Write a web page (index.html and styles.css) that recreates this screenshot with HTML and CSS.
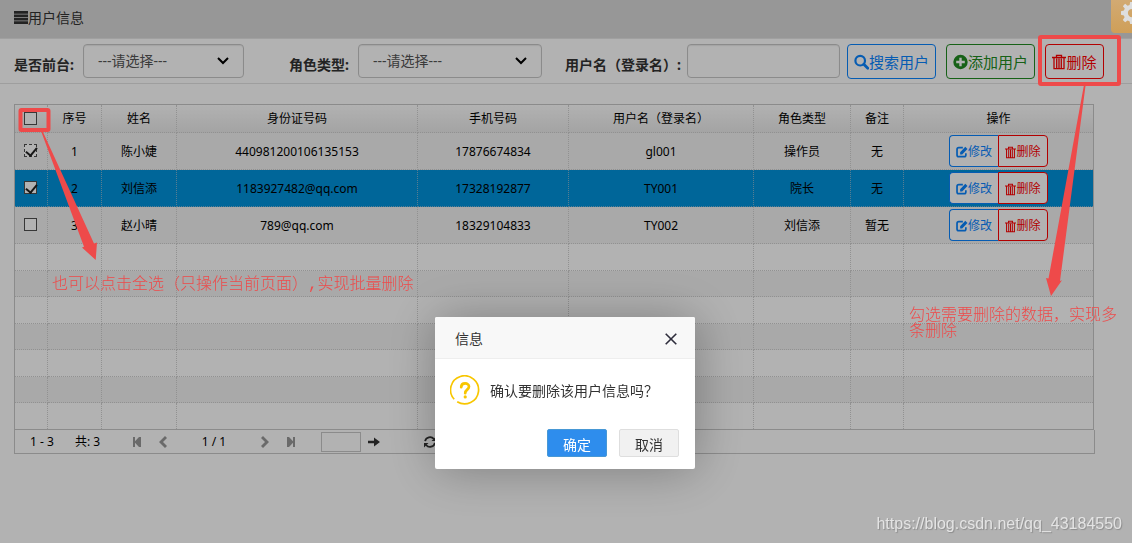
FILE: index.html
```html
<!DOCTYPE html>
<html lang="zh-CN">
<head>
<meta charset="utf-8">
<title>用户信息</title>
<link rel="stylesheet" href="styles.css">
</head>
<body>
<svg class="defs" aria-hidden="true">
  <symbol id="trash" viewBox="0 0 14 15"><path fill="none" stroke="currentColor" stroke-width="1.3" d="M0 3h14M4.5 3V.8h5V3M2 3.200v10.900h10V3.200M4.700 4v9.500M7 4v9.500M9.300 4v9.500"/></symbol>
  <symbol id="edit" viewBox="0 0 14 14"><path fill="none" stroke="currentColor" stroke-width="2" d="M8 2H3.2Q1.2 2 1.2 4v6.500q0 2 2 2h6.300q2 0 2-2V8.400"/><path fill="currentColor" d="M4.800 9.800V7.200L10.900 1l2.500 2.500-6.200 6.300z"/></symbol>
  <symbol id="chevron" viewBox="0 0 12 8"><path fill="none" stroke="currentColor" stroke-width="2" d="M1 1l5 5 5-5"/></symbol>
</svg>

<header class="titlebar">
  <svg class="menu-icon" viewBox="0 0 14 13" aria-hidden="true"><path fill="currentColor" d="M0 0h14v2.700H0zM0 3.400h14v2.700H0zM0 6.800h14v2.700H0zM0 10.300h14v2.700H0z"/></svg>
  <span>用户信息</span>
</header>

<form class="toolbar">
  <label class="label" for="front">是否前台:</label>
  <div class="select select-front">
    <select id="front"><option>---请选择---</option></select>
    <svg class="chevron" aria-hidden="true"><use href="#chevron"/></svg>
  </div>
  <label class="label label-role" for="role">角色类型:</label>
  <div class="select select-role">
    <select id="role"><option>---请选择---</option></select>
    <svg class="chevron" aria-hidden="true"><use href="#chevron"/></svg>
  </div>
  <label class="label label-login" for="login">用户名（登录名）:</label>
  <input class="login" id="login" type="text">
  <div class="actions">
    <button type="button" class="btn blue"><svg viewBox="0 0 15 15" aria-hidden="true"><circle cx="6.2" cy="6.2" r="4.8" fill="none" stroke="currentColor" stroke-width="2.2"/><path d="M9.8 9.8l4 4" stroke="currentColor" stroke-width="2.8" stroke-linecap="round"/></svg>搜索用户</button>
    <button type="button" class="btn green"><svg viewBox="0 0 15 15" aria-hidden="true"><circle cx="7.5" cy="7.5" r="7.2" fill="currentColor"/><path d="M7.5 3.2v8.6M3.2 7.5h8.6" stroke="#fff" stroke-width="2.4"/></svg>添加用户</button>
    <button type="button" class="btn red"><svg aria-hidden="true"><use href="#trash"/></svg>删除</button>
  </div>
</form>

<main class="grid">
  <table class="users">
    <colgroup><col class="c-check"><col class="c-no"><col class="c-name"><col class="c-id"><col class="c-phone"><col class="c-login"><col class="c-role"><col class="c-note"><col class="c-ops"></colgroup>
    <thead>
      <tr><th><input type="checkbox" aria-label="全选"></th><th>序号</th><th>姓名</th><th>身份证号码</th><th>手机号码</th><th>用户名（登录名）</th><th>角色类型</th><th>备注</th><th>操作</th></tr>
    </thead>
    <tbody>
      <tr class="data"><td><input class="focused" type="checkbox" checked aria-label="选择 1"></td><td>1</td><td>陈小婕</td><td>440981200106135153</td><td>17876674834</td><td>gl001</td><td>操作员</td><td>无</td><td><div class="pair"><button type="button" class="mini blue"><svg aria-hidden="true"><use href="#edit"/></svg>修改</button><button type="button" class="mini red"><svg aria-hidden="true"><use href="#trash"/></svg>删除</button></div></td></tr>
      <tr class="data selected"><td><input type="checkbox" checked aria-label="选择 2"></td><td>2</td><td>刘信添</td><td>1183927482@qq.com</td><td>17328192877</td><td>TY001</td><td>院长</td><td>无</td><td><div class="pair"><button type="button" class="mini blue"><svg aria-hidden="true"><use href="#edit"/></svg>修改</button><button type="button" class="mini red"><svg aria-hidden="true"><use href="#trash"/></svg>删除</button></div></td></tr>
      <tr class="data"><td><input type="checkbox" aria-label="选择 3"></td><td>3</td><td>赵小晴</td><td>789@qq.com</td><td>18329104833</td><td>TY002</td><td>刘信添</td><td>暂无</td><td><div class="pair"><button type="button" class="mini blue"><svg aria-hidden="true"><use href="#edit"/></svg>修改</button><button type="button" class="mini red"><svg aria-hidden="true"><use href="#trash"/></svg>删除</button></div></td></tr>
      <tr><td></td><td></td><td></td><td></td><td></td><td></td><td></td><td></td><td></td></tr>
      <tr><td></td><td></td><td></td><td></td><td></td><td></td><td></td><td></td><td></td></tr>
      <tr><td></td><td></td><td></td><td></td><td></td><td></td><td></td><td></td><td></td></tr>
      <tr><td></td><td></td><td></td><td></td><td></td><td></td><td></td><td></td><td></td></tr>
      <tr><td></td><td></td><td></td><td></td><td></td><td></td><td></td><td></td><td></td></tr>
      <tr><td></td><td></td><td></td><td></td><td></td><td></td><td></td><td></td><td></td></tr>
      <tr><td></td><td></td><td></td><td></td><td></td><td></td><td></td><td></td><td></td></tr>
    </tbody>
  </table>
  <nav class="pager" aria-label="分页">
    <span class="range">1 - 3</span>
    <span class="total">共: 3</span>
    <button type="button" class="nav" aria-label="首页"><svg viewBox="0 0 8 12"><path d="M0 1h2v4.200L6 1h2v10H6L2 6.800V11H0z"/></svg></button>
    <button type="button" class="nav" aria-label="上一页"><svg viewBox="0 0 8 12"><path d="M6 0l2 2-4 4 4 4-2 2-6-6z"/></svg></button>
    <span class="page">1 / 1</span>
    <button type="button" class="nav" aria-label="下一页"><svg viewBox="0 0 8 12"><path d="M2 0L0 2l4 4-4 4 2 2 6-6z"/></svg></button>
    <button type="button" class="nav" aria-label="末页"><svg viewBox="0 0 8 12"><path d="M8 1H6v4.200L2 1H0v10h2l4-4.200V11h2z"/></svg></button>
    <input class="goto" type="text" aria-label="跳转页码">
    <button type="button" class="go" aria-label="跳转"><svg viewBox="0 0 12 12"><path d="M0 4.800h6V1.500L12 6l-6 4.500V7.200H0z"/></svg></button>
    <button type="button" class="refresh" aria-label="刷新"><svg viewBox="0 0 12 12"><path fill="none" stroke="currentColor" stroke-width="1.8" d="M1.100 5.200A5 5 0 0 1 9.900 3M10.900 6.800A5 5 0 0 1 2.100 9"/><path d="M12 .5V5H7.500zM0 11.500V7h4.500z"/></svg></button>
  </nav>
</main>

<div class="shade">
  <section class="dialog" role="dialog" aria-labelledby="dialog-title">
    <div class="dialog-head">
      <span id="dialog-title">信息</span>
      <button type="button" class="close" aria-label="关闭"><svg viewBox="0 0 12 12"><path fill="none" stroke="currentColor" stroke-width="1.6" d="M.7.7l10.600 10.600M11.300.7L.7 11.300"/></svg></button>
    </div>
    <div class="dialog-body">
      <svg class="question" viewBox="0 0 30 30" aria-hidden="true"><path fill="none" stroke="currentColor" stroke-width="1.7" d="M4.200 24.200A14 14 0 1 1 7.200 26.700"/><path fill="none" stroke="currentColor" stroke-width="2.700" stroke-linecap="round" stroke-linejoin="round" d="M11.200 12.200c0-5 7.800-4.800 7.800-.6 0 3.100-3.800 3-3.800 6.600"/><circle cx="15.2" cy="21.900" r="1.600" fill="currentColor"/></svg>
      <span>确认要删除该用户信息吗？</span>
    </div>
    <div class="dialog-foot">
      <button type="button" class="confirm">确定</button>
      <button type="button" class="cancel">取消</button>
    </div>
  </section>
</div>

<button type="button" class="settings" aria-label="设置"><svg viewBox="0 0 24 24"><path fill="currentColor" fill-rule="evenodd" d="M10 0h4l.6 3.200 2.200.9L19.500 2 22 4.500l-1.900 2.800.9 2.100L24 10v4l-3.100.7-.9 2.100 2 2.700-2.500 2.500-2.800-1.900-2.100.8L14 24h-4l-.7-3.100-2.100-.8L4.500 22 2 19.500l1.900-2.800-.8-2.100L0 14v-4l3.200-.6.9-2.200L2 4.500 4.500 2l2.700 2.100 2.200-.9zM12 7.500a4.500 4.500 0 1 0 0 9 4.500 4.500 0 0 0 0-9z"/></svg></button>

<svg class="marks" aria-hidden="true">
  <rect x="20.500" y="110" width="28" height="20" fill="none" stroke-width="4" rx="1"/>
  <rect x="1040" y="37" width="79" height="47" fill="none" stroke-width="4" rx="1"/>
  <path d="M41 131h1.500L94 243.500l3-1L95.700 260 82 247.500l2-.8z"/>
  <path d="M1084.500 82h1.500L1060 281l2-.8L1051 296 1046 278l2.500.5z"/>
</svg>
<p class="note note-left">也可以点击全选（只操作当前页面）,实现批量删除</p>
<p class="note note-right">勾选需要删除的数据，实现多条删除</p>
<p class="watermark">https://blog.csdn.net/qq_43184550</p>
</body>
</html>
```
FILE: styles.css
```css
* { box-sizing: border-box; }

body {
  margin: 0;
  min-height: 100vh;
  position: relative;
  background: #fff;
  color: #333;
  font: 14px/20px "Noto Sans", "Noto Sans CJK SC", sans-serif;
}

button, input, select { font: inherit; color: inherit; margin: 0; padding: 0; }
button { display: inline-flex; align-items: center; justify-content: center; background: none; border: 0; }
svg { display: block; flex: none; }
.defs { position: absolute; width: 0; height: 0; }

.titlebar {
  display: flex;
  align-items: center;
  height: 39px;
  padding: 0 14px 3px;
  background: #d8d8d8;
  border-bottom: 1px solid #e6e6e6;
}
.menu-icon { width: 14px; height: 13px; }

.toolbar {
  display: flex;
  align-items: flex-start;
  height: 45px;
  padding: 5px 28px 0 14px;
  border-bottom: 1px solid #e2e2e2;
}
.label { flex: none; width: 69px; padding-top: 11px; font-weight: bold; white-space: nowrap; }
.label-role { margin-left: 45px; }
.label-login { width: 122px; margin-left: 23px; }
.select { position: relative; color: #555; }
.select-front { width: 161px; }
.select-role { width: 184px; }
.select select, .login {
  display: block;
  width: 100%;
  height: 34px;
  border: 1px solid #c8c8c8;
  border-radius: 4px;
  background: #fff;
  box-shadow: inset 0 1px 1px rgba(0, 0, 0, .08);
}
.select select { appearance: none; padding: 0 14px; }
.chevron { position: absolute; right: 15px; top: 13px; width: 12px; height: 8px; color: #000; pointer-events: none; }
.login { flex: 1; min-width: 60px; padding: 0 8px; }

.actions { display: flex; gap: 10px; margin-left: 7px; }
.btn {
  height: 35px;
  padding: 0 6px;
  border: 1px solid currentColor;
  border-radius: 4px;
  background: #fff;
  font-size: 15px;
  white-space: nowrap;
}
.btn svg { width: 15px; height: 16px; }
.blue { color: #0a84ff; }
.green { color: #228b22; }
.red { color: #ff0000; }
.btn.red { width: 59px; }
.btn.red svg { width: 14px; }

.grid { margin: 20px 38px 0 14px; font-size: 12px; color: #000; }
.users {
  width: 100%;
  table-layout: fixed;
  border-collapse: separate;
  border-spacing: 0;
  border: 1px solid #c8c8c8;
}
.c-check { width: 33px; }
.c-no { width: 54px; }
.c-name { width: 75px; }
.c-id { width: 241px; }
.c-phone { width: 151px; }
.c-login { width: 185px; }
.c-role { width: 97px; }
.c-note { width: 53px; }
.c-ops { width: 189px; }

.users th, .users td {
  padding: 0;
  height: 26px;
  text-align: center;
  font-weight: normal;
  line-height: 18px;
  border-right: 1px dotted #d0d0d0;
  border-bottom: 1px dotted #d0d0d0;
}
.users th:last-child, .users td:last-child { border-right: 0; }
.users th { height: 28px; }
.users thead tr { background: linear-gradient(#fff, #eaeaea); }
.users tbody tr:nth-child(odd) { background: #f3f3f3; }
.users tbody tr:nth-child(even) td { height: 27px; }
.users tbody tr.data td { height: 37px; }
.users tbody tr.data td:not(:first-child):not(:last-child) { padding-top: 2px; }
.users tbody tr:last-child td { height: 26px; border-bottom: 0; }
.users tbody tr.selected { background: #0092dc; }
.users tr.selected td { border-color: #7fb5d2; }

.users input {
  appearance: none;
  display: block;
  position: relative;
  width: 13px;
  height: 13px;
  margin: 0 9px 1px;
  border: 1px solid #505050;
  background: #fff;
}
.users input.focused { border-style: dashed; }
.users input:checked::after {
  content: "";
  position: absolute;
  left: 3px;
  top: 0;
  width: 5px;
  height: 9px;
  border: solid #222;
  border-width: 0 2px 2px 0;
  transform: rotate(40deg);
}

.pair { display: flex; justify-content: center; }
.mini { width: 50px; height: 32px; padding-top: 2px; border: 1px solid currentColor; background: #fff; }
.mini.blue { width: 49px; border-right: 0; border-radius: 4px 0 0 4px; }
.mini.red { border-radius: 0 4px 4px 0; }
.mini svg { width: 12px; height: 12px; }
.mini.red svg { width: 11px; height: 13px; }

.pager {
  display: flex;
  align-items: center;
  height: 24px;
  margin-right: -1px;
  padding-left: 15px;
  border: 1px solid #c8c8c8;
  border-top: 0;
}
.range { width: 45px; }
.total { width: 58px; }
.page { width: 58px; margin-right: 18px; text-align: center; }
.nav { width: 8px; margin-right: 18px; color: #999; }
.nav svg { width: 8px; height: 12px; fill: currentColor; }
.goto { width: 40px; height: 20px; margin-left: 8px; border: 1px solid #c8c8c8; background: #fff; }
.go, .refresh { margin-left: 7px; color: #333; }
.refresh { margin-left: 44px; }
.go svg, .refresh svg { width: 12px; height: 12px; fill: currentColor; }

.shade {
  position: fixed;
  inset: 0;
  display: flex;
  align-items: flex-start;
  justify-content: center;
  padding: 317px 2px 0 0;
  background: rgba(0, 0, 0, .3);
}
.dialog { width: 260px; border-radius: 2px; background: #fff; box-shadow: 1px 1px 50px rgba(0, 0, 0, .3); }
.dialog-head {
  display: flex;
  align-items: center;
  justify-content: space-between;
  height: 42px;
  padding: 2px 18px 0 20px;
  background: #f8f8f8;
  border-bottom: 1px solid #eee;
  border-radius: 2px 2px 0 0;
}
.close { color: #2e2d3c; }
.close svg { width: 12px; height: 12px; }
.dialog-body { display: flex; align-items: center; gap: 10px; padding: 16px 15px 0; white-space: nowrap; }
.dialog-body span { padding-top: 2px; }
.question { width: 30px; height: 30px; color: #f8c600; }
.dialog-foot { display: flex; justify-content: flex-end; gap: 12px; padding: 24px 16px 12px; }
.confirm, .cancel { width: 60px; height: 28px; padding-top: 4px; border: 1px solid #4898d5; border-radius: 2px; background: #2e8ded; color: #fff; }
.cancel { border-color: #dedede; background: #f1f1f1; color: #333; }

.settings {
  position: absolute;
  top: 0;
  right: 0;
  width: 21px;
  height: 33px;
  padding: 0 0 7px 10px;
  justify-content: flex-start;
  overflow: hidden;
  border-radius: 0 0 0 4px;
  background: linear-gradient(#d2aa73, #cf9f58);
  color: #dedede;
}
.settings svg { width: 22px; height: 22px; }

.marks { position: absolute; left: 0; top: 0; width: 1132px; height: 300px; fill: #ee4a4a; stroke: #ee4a4a; stroke-width: 0; pointer-events: none; }
.note { position: absolute; margin: 0; color: #ee4a4a; font: 300 16px/16px "Liberation Mono", "Noto Sans CJK SC", monospace; }
.note-left { left: 52px; top: 277px; }
.note-right { left: 909px; top: 308px; width: 212px; }
.watermark {
  position: absolute;
  right: 10px;
  top: 514px;
  margin: 0;
  font: 16px/20px "Liberation Sans", sans-serif;
  color: #e4e4e4;
  text-shadow: 1px 1px 1px #8c8c8c;
}
```
